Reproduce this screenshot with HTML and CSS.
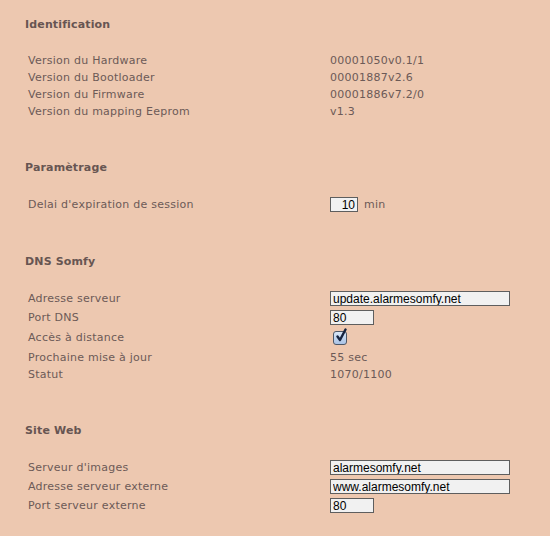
FILE: index.html
```html
<!DOCTYPE html>
<html lang="fr">

<head>
    <meta charset="UTF-8">
    <meta name="viewport" content="width=device-width, initial-scale=1.0">
    <title>Configuration</title>

    <link rel="stylesheet" href="styles.css">
</head>

<body>
    <div class="page">

        <section class="block">
            <h2>Identification</h2>
            <div class="row">
                <span class="label">Version du Hardware</span>
                <span class="value">00001050v0.1/1</span>
            </div>
            <div class="row">
                <span class="label">Version du Bootloader</span>
                <span class="value">00001887v2.6</span>
            </div>
            <div class="row">
                <span class="label">Version du Firmware</span>
                <span class="value">00001886v7.2/0</span>
            </div>
            <div class="row">
                <span class="label">Version du mapping Eeprom</span>
                <span class="value">v1.3</span>
            </div>
        </section>

        <section class="block">
            <h2>Paramètrage</h2>
            <div class="row field">
                <span class="label">Delai d'expiration de session</span>
                <span class="value">
                    <input class="box tiny right" type="text" value="10">
                    <span class="unit">min</span>
                </span>
            </div>
        </section>

        <section class="block">
            <h2>DNS Somfy</h2>
            <div class="row field">
                <span class="label">Adresse serveur</span>
                <span class="value"><input class="box wide" type="text" value="update.alarmesomfy.net"></span>
            </div>
            <div class="row field">
                <span class="label">Port DNS</span>
                <span class="value"><input class="box small" type="text" value="80"></span>
            </div>
            <div class="row check-row">
                <span class="label">Accès à distance</span>
                <span class="value">
                    <span class="check">
                        <svg width="16" height="16" viewBox="0 0 16 16">
                            <path d="M3.5 8.5 L6 12 L11.5 1.5" fill="none" stroke="#16233f" stroke-width="2.4" stroke-linecap="round" stroke-linejoin="round"/>
                        </svg>
                    </span>
                </span>
            </div>
            <div class="row after-check">
                <span class="label">Prochaine mise à jour</span>
                <span class="value">55 sec</span>
            </div>
            <div class="row">
                <span class="label">Statut</span>
                <span class="value">1070/1100</span>
            </div>
        </section>

        <section class="block">
            <h2>Site Web</h2>
            <div class="row field">
                <span class="label">Serveur d'images</span>
                <span class="value"><input class="box wide" type="text" value="alarmesomfy.net"></span>
            </div>
            <div class="row field">
                <span class="label">Adresse serveur externe</span>
                <span class="value"><input class="box wide" type="text" value="www.alarmesomfy.net"></span>
            </div>
            <div class="row field">
                <span class="label">Port serveur externe</span>
                <span class="value"><input class="box small" type="text" value="80"></span>
            </div>
        </section>

    </div>
</body>

</html>
```

FILE: styles.css
```css
html,
body {
    margin: 0;
    background: #edc8b0;
}

body {
    font-family: "DejaVu Sans", Verdana, sans-serif;
    font-size: 11px;
    letter-spacing: 0.25px;
    color: #6c5a57;
}

.page {
    padding: 16px 0 0 25px;
}

.block {
    margin-bottom: 39px;
}

h2 {
    margin: 0 0 19px 0;
    font-size: 11px;
    line-height: 17px;
    font-weight: bold;
    letter-spacing: 0.15px;
    color: #675552;
}

.row {
    display: flex;
    align-items: center;
    height: 17px;
    padding-left: 3px;
}

.row.field {
    height: 19px;
}

.row.check-row {
    height: 21px;
}

.row.after-check {
    height: 18px;
}

.label {
    width: 302px;
    flex: none;
    white-space: nowrap;
}

.value {
    display: flex;
    align-items: center;
    gap: 6px;
}

.box {
    box-sizing: border-box;
    height: 15px;
    margin: 0;
    padding: 0 2px;
    border: 1px solid #5e5e5e;
    border-radius: 0;
    background: #f1f1f1;
    font-family: "Liberation Sans", Arial, sans-serif;
    font-size: 12px;
    letter-spacing: 0;
    color: #000;
    outline: none;
}

.box.wide {
    width: 180px;
}

.box.small {
    width: 44px;
}

.box.tiny {
    width: 28px;
}

.box.right {
    text-align: right;
}

.unit {
    color: #6c5a57;
}

.check {
    position: relative;
    display: block;
    width: 12px;
    height: 12px;
    margin-left: 3px;
    border: 1px solid #4d5766;
    border-radius: 3px;
    background: linear-gradient(#d9e6f6, #a9c3e6);
}

.check svg {
    position: absolute;
    left: 0;
    top: -4px;
}
```
